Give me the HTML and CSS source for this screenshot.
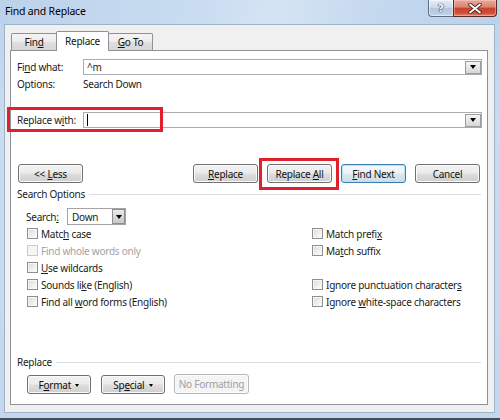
FILE: index.html
```html
<!DOCTYPE html>
<html>
<head>
<meta charset="utf-8">
<title>Find and Replace</title>
<link rel="stylesheet" href="styles.css">
</head>
<body>
<div class="window">
  <div class="titlebar">
    <div class="title">Find and Replace</div>
    <div class="caption">
      <div class="cap-btn help"><span>?</span></div>
      <div class="cap-btn close">
        <svg width="14" height="11" viewBox="0 0 14 11"><path d="M2 1.5 L12 9.5 M12 1.5 L2 9.5" stroke="#4a2a25" stroke-width="3.6" stroke-linecap="round"/><path d="M2 1.5 L12 9.5 M12 1.5 L2 9.5" stroke="#ffffff" stroke-width="1.8" stroke-linecap="round"/></svg>
      </div>
    </div>
  </div>
  <div class="client">
    <div class="tabs">
      <div class="tab tab-find"><span>Fin<u>d</u></span></div>
      <div class="tab tab-replace active"><span>Replace</span></div>
      <div class="tab tab-goto"><span><u>G</u>o To</span></div>
    </div>
    <div class="panel">
      <div class="field-row row-find">
        <div class="label">Fi<u>n</u>d what:</div>
        <div class="combo"><span class="combo-text">^m</span><span class="combo-btn"><i class="tri"></i></span></div>
      </div>
      <div class="field-row row-options">
        <div class="label">Options:</div>
        <div class="value">Search Down</div>
      </div>
      <div class="field-row row-replace">
        <div class="label">Replace w<u>i</u>th:</div>
        <div class="combo"><span class="combo-text"><span class="caret"></span></span><span class="combo-btn"><i class="tri"></i></span></div>
      </div>
      <div class="actions">
        <div class="btn btn-less"><span>&lt;&lt; <u>L</u>ess</span></div>
        <div class="action-group">
          <div class="btn"><span><u>R</u>eplace</span></div>
          <div class="btn"><span>Replace <u>A</u>ll</span></div>
          <div class="btn default"><span><u>F</u>ind Next</span></div>
          <div class="btn"><span>Cancel</span></div>
        </div>
      </div>
      <div class="group-label gl-search"><span>Search Options</span></div>
      <div class="search-row">
        <span class="search-label">Search<u>:</u></span>
        <div class="select"><span class="select-text">Down</span><span class="select-btn"><i class="tri"></i></span></div>
      </div>
      <div class="checks">
        <div class="check"><i class="box"></i><span>Matc<u>h</u> case</span></div>
        <div class="check"><i class="box"></i><span>Match prefi<u>x</u></span></div>
        <div class="check disabled"><i class="box"></i><span>Find whole words only</span></div>
        <div class="check"><i class="box"></i><span>Ma<u>t</u>ch suffix</span></div>
        <div class="check"><i class="box"></i><span><u>U</u>se wildcards</span></div>
        <div class="check empty"></div>
        <div class="check"><i class="box"></i><span>Sounds li<u>k</u>e (English)</span></div>
        <div class="check"><i class="box"></i><span>Ignore punctuation character<u>s</u></span></div>
        <div class="check"><i class="box"></i><span>Find all <u>w</u>ord forms (English)</span></div>
        <div class="check"><i class="box"></i><span>Ignore <u>w</u>hite-space characters</span></div>
      </div>
      <div class="group-label gl-replace"><span>Replace</span></div>
      <div class="bottom-buttons">
        <div class="btn"><span>F<u>o</u>rmat <i class="tri small"></i></span></div>
        <div class="btn"><span>Sp<u>e</u>cial <i class="tri small"></i></span></div>
        <div class="btn disabled-btn"><span>No Formatting</span></div>
      </div>
    </div>
  </div>
  <div class="highlight hl-replace-with"></div>
  <div class="highlight hl-replace-all"></div>
</div>
</body>
</html>
```

FILE: styles.css
```css
* { box-sizing: border-box; }
html, body { margin: 0; padding: 0; }
body {
  width: 500px;
  height: 420px;
  overflow: hidden;
  font-family: "Noto Sans", "Open Sans", sans-serif;
  font-size: 10px;
  letter-spacing: -0.25px;
  color: #1a1a1a;
  background: #c6daef;
}
u { text-decoration: underline; text-underline-offset: 1px; }

.window {
  position: relative;
  width: 500px;
  height: 420px;
  background: linear-gradient(to bottom, #bcd3ec 0%, #c9dcf1 30%, #c3d8ee 100%);
  border-bottom: 2px solid #3e4e60;
}

/* title bar */
.titlebar {
  height: 24px;
  display: flex;
  align-items: flex-start;
  background: linear-gradient(100deg, #bcd2eb 0%, #c9dcf0 40%, #d5e4f4 55%, #c4d8ee 75%, #bcd2eb 100%);
}
.title {
  flex: 1;
  padding: 4px 0 0 5px;
  font-size: 10.5px;
  letter-spacing: -0.2px;
  line-height: 14px;
  color: #000;
}
.caption {
  display: flex;
  margin-right: 3px;
}
.cap-btn {
  height: 17px;
  display: flex;
  align-items: center;
  justify-content: center;
  border: 1px solid #5c6e86;
  border-top: none;
}
.help {
  width: 25px;
  border-right: none;
  border-radius: 0 0 0 4px;
  background: linear-gradient(to bottom, #e4edf7 0%, #c9d8ea 50%, #b2c5dc 51%, #c3d4e6 100%);
  box-shadow: inset 0 0 0 1px rgba(255,255,255,0.5);
}
.help span {
  font-family: "DejaVu Sans", sans-serif;
  font-weight: bold;
  font-size: 11px;
  letter-spacing: 0;
  color: #f4f8fc;
  text-shadow: 0 0 1px #34465e, 0 0 1px #34465e, 0 0 1px #34465e;
}
.close {
  width: 44px;
  border-color: #5b2a24;
  border-radius: 0 0 4px 0;
  background: linear-gradient(to bottom, #e9a99c 0%, #dc8270 45%, #c7432e 50%, #cf4d36 80%, #e08a6d 100%);
  box-shadow: inset 0 0 0 1px rgba(255,220,210,0.4);
}

/* client area */
.client {
  margin: 0 5px 0 4px;
  height: 389px;
  background: #f0f0f0;
  border: 1px solid #9fb3c8;
  padding-top: 6px;
}
.tabs {
  display: flex;
  align-items: flex-end;
  margin-left: 6px;
  height: 19px;
  position: relative;
  z-index: 2;
}
.tab {
  height: 17px;
  border: 1px solid #8e9198;
  border-bottom: none;
  border-radius: 2px 2px 0 0;
  background: linear-gradient(to bottom, #f5f5f5 0%, #ebebeb 50%, #dedede 51%, #d6d6d6 100%);
  display: flex;
  align-items: center;
  justify-content: center;
  color: #111;
}
.tab-find { width: 46px; }
.tab-replace { width: 53px; margin-left: -1px; }
.tab-goto { width: 45px; margin-left: -1px; }
.tab.active {
  height: 20px;
  background: #ffffff;
  margin-bottom: -1px;
  padding-bottom: 2px;
  position: relative;
  z-index: 3;
}

.panel {
  margin-left: 5px;
  width: 478px;
  height: 355px;
  background: #ffffff;
  border: 1px solid #8e9198;
  position: relative;
  z-index: 1;
}

.field-row {
  display: flex;
  align-items: center;
}
.label {
  width: 72px;
  padding-left: 6px;
  flex: none;
}
.row-find { margin-top: 8px; }
.row-options { margin-top: 2px; height: 14px; }
.row-replace { margin-top: 21px; }

.combo {
  width: 399px;
  height: 16px;
  border: 1px solid #a9acb3;
  display: flex;
  align-items: center;
  justify-content: space-between;
  background: #fff;
}
.combo-text { padding-left: 3px; display: flex; align-items: center; }
.caret {
  display: inline-block;
  width: 1px;
  height: 12px;
  background: #000;
}
.combo-btn {
  width: 16px;
  height: 13px;
  border: 1px solid #9c9c9c;
  background: linear-gradient(to bottom, #f6f6f6 0%, #e6e6e6 50%, #d6d6d6 100%);
  display: flex;
  align-items: center;
  justify-content: center;
}
.tri {
  display: inline-block;
  width: 0;
  height: 0;
  border-left: 3.5px solid transparent;
  border-right: 3.5px solid transparent;
  border-top: 4px solid #000;
}
.tri.small {
  border-left-width: 2.5px;
  border-right-width: 2.5px;
  border-top-width: 3px;
  margin-left: 2px;
  vertical-align: middle;
}

/* buttons */
.actions {
  margin-top: 36px;
  display: flex;
  justify-content: space-between;
  padding: 0 7px 0 7px;
}
.action-group {
  display: flex;
  gap: 9px;
}
.btn {
  height: 19px;
  width: 65px;
  border: 1px solid #707070;
  border-radius: 3px;
  background: linear-gradient(to bottom, #f2f2f2 0%, #ebebeb 48%, #dddddd 52%, #cfcfcf 100%);
  box-shadow: inset 0 0 0 1px #fbfbfb;
  display: flex;
  align-items: center;
  justify-content: center;
  color: #111;
  white-space: nowrap;
}
.btn.default {
  border-color: #3c7fb1;
  box-shadow: inset 0 0 0 1px #b3e2f8;
  background: linear-gradient(to bottom, #f4f9fc 0%, #ebf3f8 48%, #dde8ef 52%, #d0dde6 100%);
}

/* group labels */
.group-label {
  display: flex;
  align-items: center;
  padding: 0 6px;
  height: 14px;
}
.group-label::after {
  content: "";
  flex: 1;
  height: 1px;
  background: #d8dfe4;
  margin-left: 4px;
}
.gl-search { margin-top: 4px; }
.gl-replace { margin-top: 45px; }

.search-row {
  margin-top: 7px;
  display: flex;
  align-items: center;
  padding-left: 15px;
}
.search-label { width: 41px; }
.select {
  width: 59px;
  height: 17px;
  border: 1px solid #a4a4a4;
  display: flex;
  align-items: center;
  justify-content: space-between;
}
.select-text { padding-left: 4px; }
.select-btn {
  width: 13px;
  height: 15px;
  border: 1px solid #8f8f8f;
  background: linear-gradient(to bottom, #eaeaea 0%, #d8d8d8 50%, #c9c9c9 100%);
  display: flex;
  align-items: center;
  justify-content: center;
}

.checks {
  display: grid;
  grid-template-columns: 285px auto;
  grid-auto-rows: 17px;
  padding-left: 16px;
}
.check {
  display: flex;
  align-items: center;
  white-space: nowrap;
}
.box {
  width: 11px;
  height: 11px;
  border: 1px solid #8e8f8f;
  background: linear-gradient(135deg, #d9d9d9 0%, #f0f0f0 60%, #ffffff 100%);
  box-shadow: inset 0 0 0 1px #f6f6f6;
  margin-right: 3px;
  flex: none;
}
.check.disabled { color: #a3a3a3; }
.check.disabled .box {
  border-color: #cbcbcb;
  background: #f5f5f5;
}

.bottom-buttons {
  margin-top: 5px;
  display: flex;
  gap: 10px;
  padding-left: 16px;
  align-items: flex-end;
}
.bottom-buttons .btn { width: 64px; }
.bottom-buttons .disabled-btn {
  width: 75px;
  height: 20px;
  border-color: #b5b8bb;
  background: #f4f4f4;
  box-shadow: inset 0 0 0 1px #fcfcfc;
  color: #a0a0a0;
  margin-left: -1px;
}

/* red annotation boxes */
.highlight {
  position: absolute;
  border: 3px solid #e0202c;
  z-index: 10;
}
.hl-replace-with { left: 7px; top: 107px; width: 156px; height: 25px; }
.hl-replace-all { left: 259px; top: 158px; width: 80px; height: 32px; }
```
